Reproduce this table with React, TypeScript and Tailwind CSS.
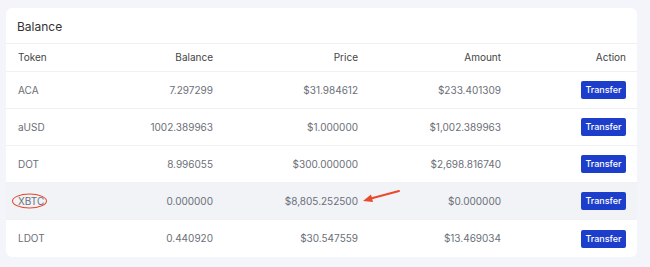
import React from "react";

const rows = [
  { token: "ACA", balance: "7.297299", price: "$31.984612", amount: "$233.401309" },
  { token: "aUSD", balance: "1002.389963", price: "$1.000000", amount: "$1,002.389963" },
  { token: "DOT", balance: "8.996055", price: "$300.000000", amount: "$2,698.816740" },
  { token: "XBTC", balance: "0.000000", price: "$8,805.252500", amount: "$0.000000", hl: true },
  { token: "LDOT", balance: "0.440920", price: "$30.547559", amount: "$13.469034" },
];

const cols = "grid grid-cols-[95px_100px_145px_143px_125px] items-center pl-[12px] pr-[11px]";

export default function App() {
  return (
    <div
      className="w-[650px] h-[267px] bg-[#f4f5fb] pt-[8px] pl-[6px] pr-[13px]"
      style={{ fontFamily: "Inter, 'Noto Sans', sans-serif" }}
    >
      <div className="bg-white rounded-[6px] overflow-hidden">
        <div className="h-[36px] flex items-center pl-[11px] pt-[3px] text-[12px] text-[#333] border-b border-[#f0f1f4]">
          Balance
        </div>
        <div className={`${cols} h-[28px] text-[10px] text-[#444] border-b border-[#f0f1f4]`}>
          <div>Token</div>
          <div className="text-right">Balance</div>
          <div className="text-right">Price</div>
          <div className="text-right">Amount</div>
          <div className="text-right">Action</div>
        </div>
        {rows.map((r, i) => (
          <div
            key={r.token}
            className={`${cols} h-[37px] text-[10px] text-[#6b6f78] ${i < rows.length - 1 ? "border-b border-[#f0f1f4]" : ""} ${r.hl ? "bg-[#f1f3f7]" : ""}`}
          >
            <div>
              <span className="relative inline-block">
                {r.token}
                {r.hl && (
                  <span className="absolute left-[-6px] top-1/2 -translate-y-1/2 w-[35px] h-[15px] rounded-[50%] border-[1.5px] border-[#e8452c]" />
                )}
              </span>
            </div>
            <div className="text-right">{r.balance}</div>
            <div className="text-right relative">
              {r.price}
              {r.hl && (
                <svg
                  className="absolute left-[148px] top-[-5px]"
                  width="40"
                  height="16"
                  viewBox="0 0 40 16"
                >
                  <path d="M38 2 L8 10" stroke="#ea4a2a" strokeWidth="2" strokeLinecap="round" />
                  <path d="M2 12 L10 5.5 L12 13 Z" fill="#ea4a2a" />
                </svg>
              )}
            </div>
            <div className="text-right">{r.amount}</div>
            <div className="flex justify-end">
              <button className="w-[45px] h-[18px] rounded-[2px] bg-[#1c3ecb] text-white text-[9px] font-medium">
                Transfer
              </button>
            </div>
          </div>
        ))}
      </div>
    </div>
  );
}
